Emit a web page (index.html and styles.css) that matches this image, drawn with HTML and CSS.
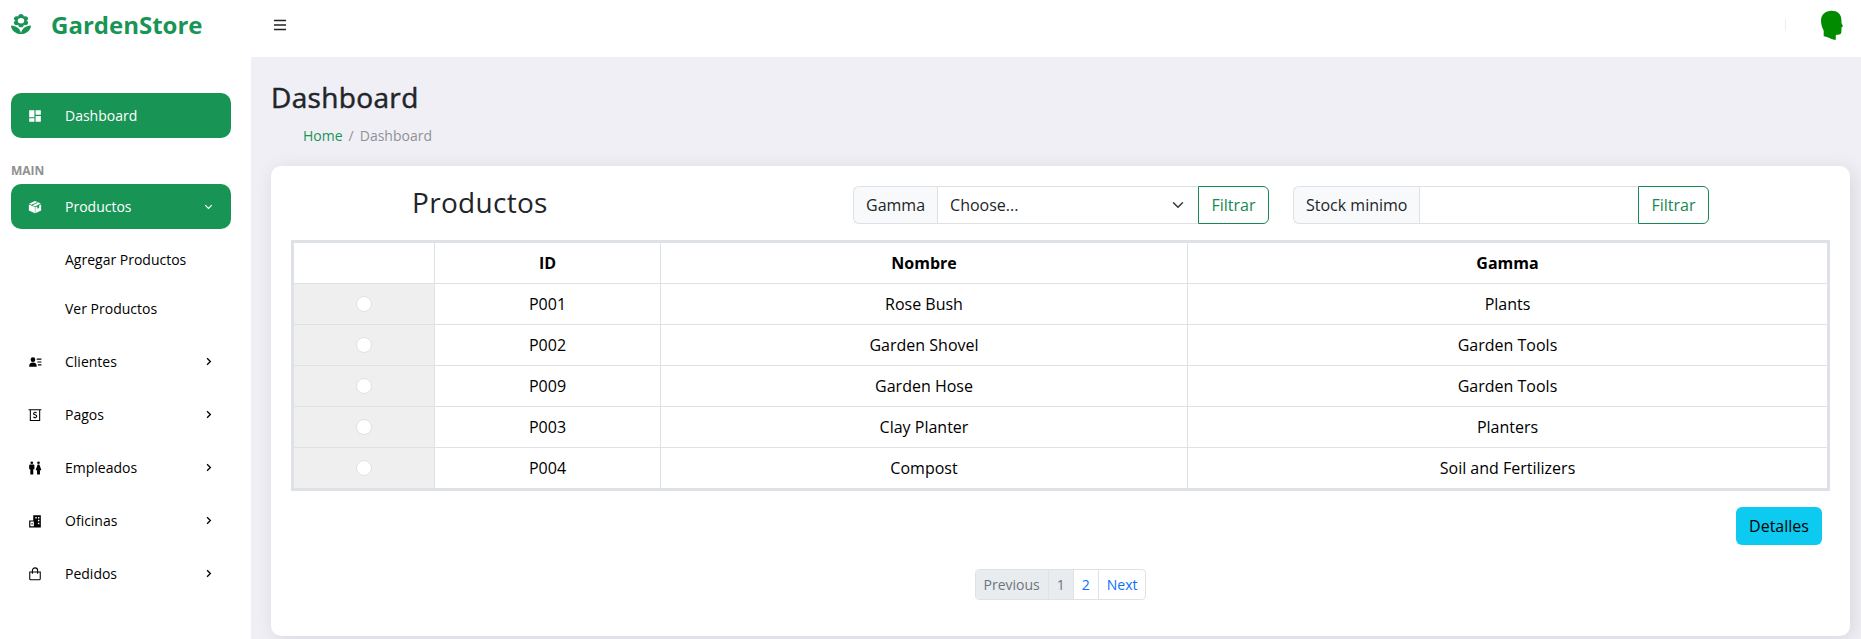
FILE: index.html
```html
<!DOCTYPE html>
<html lang="es">
<head>
<meta charset="utf-8">
<title>GardenStore</title>
<link rel="stylesheet" href="styles.css">
</head>
<body>
<header class="navbar">
  <div class="brand">
    <svg class="brand-icon" viewBox="3 1 18 21" preserveAspectRatio="none"><path d="M12 22c4.97 0 9-4.03 9-9-4.97 0-9 4.03-9 9zM5.6 10.25c0 1.38 1.12 2.5 2.5 2.5.53 0 1.01-.16 1.42-.44l-.02.19c0 1.38 1.12 2.5 2.5 2.5s2.5-1.12 2.5-2.5l-.02-.19c.4.28.89.44 1.42.44 1.38 0 2.5-1.12 2.5-2.5 0-1-.59-1.85-1.43-2.25.84-.4 1.43-1.25 1.43-2.25 0-1.38-1.12-2.5-2.5-2.5-.53 0-1.01.16-1.42.44l.02-.19C14.5 2.12 13.38 1 12 1S9.5 2.12 9.5 3.5l.02.19c-.4-.28-.89-.44-1.42-.44-1.38 0-2.5 1.12-2.5 2.5 0 1 .59 1.85 1.43 2.25-.84.4-1.43 1.25-1.43 2.25zM12 5.1a2.9 2.9 0 1 1 0 5.8a2.9 2.9 0 0 1 0-5.8zM3 13c0 4.97 4.03 9 9 9 0-4.97-4.03-9-9-9z"/></svg>
    <span>GardenStore</span>
  </div>
  <svg class="menu-icon" viewBox="0 0 16 16"><path d="M2 3.500h12M2 8h12M2 12.500h12"/></svg>
  <div class="nav-right">
    <span class="divider"></span>
    <svg class="avatar" viewBox="0 0 22 30"><path d="M2.700 26.200V20.500C1 17.500 0 14 0 10.500C0 4.500 4.500.7 10.500.7S20 4 20.400 9.500L20.500 13L22 16.300L20.600 17.300L20.300 22.500Q20 24.600 18 24.500L14.800 25V29.800C10 29.600 7 26.500 2.700 26.200z"/></svg>
  </div>
</header>
<div class="layout">
  <aside class="sidebar">
    <a class="item active"><svg class="icon" viewBox="0 0 24 24"><path d="M2 2h9v12H2zM13 2h9v8h-9zM2 16h9v6H2zM13 12h9v10h-9z"/></svg><span>Dashboard</span></a>
    <p class="section">MAIN</p>
    <a class="item active products"><svg class="icon" viewBox="0 0 24 24"><path d="M12 1.500L22 6.200L12 11L7.800 9L17 4.500L15.500 3.800L6 8.300L2 6.300zM1.500 7.500L11.800 12.200V22.800L1.500 17.800zM22.500 7.500V17.800L12.600 22.800V12.300L16 11V15L19 13.500V9.500z"/></svg><span>Productos</span><svg class="chevron" viewBox="0 0 16 16"><path d="M4.500 6.500L8 10L11.500 6.500"/></svg></a>
    <a class="sub">Agregar Productos</a>
    <a class="sub last">Ver Productos</a>
    <a class="item"><svg class="icon" viewBox="0 0 24 24"><path d="M8.500 4a4 4 0 1 1 0 8a4 4 0 0 1 0-8zM2 20c0-5 2-7 6.500-7s6.500 2 6.500 7zM15 6h8v2h-8zM16 11h7v2h-7zM17 16h6v2h-6z"/></svg><span>Clientes</span><svg class="chevron" viewBox="0 0 16 16"><path d="M6.500 4.500L10 8L6.500 11.500"/></svg></a>
    <a class="item"><svg class="icon outline" viewBox="0 0 24 24"><path d="M1 3H23M4 3V21.500H20V3M15 8.500C14 7.500 9.500 7 9.500 9.700C9.500 12.300 15 11 15 14C15 17 10 16.300 9 15.300M12 6.500V8M12 16V18"/></svg><span>Pagos</span><svg class="chevron" viewBox="0 0 16 16"><path d="M6.500 4.500L10 8L6.500 11.500"/></svg></a>
    <a class="item"><svg class="icon" viewBox="0 0 24 24"><circle cx="6.500" cy="3" r="2.300"/><circle cx="18" cy="3" r="2.300"/><path d="M3.500 6h6Q11 6 11 8v6H9v9H4v-9H2V8Q2 6 3.500 6zM16.500 6h3L23 16h-2.500v7h-5v-7H13z"/></svg><span>Empleados</span><svg class="chevron" viewBox="0 0 16 16"><path d="M6.500 4.500L10 8L6.500 11.500"/></svg></a>
    <a class="item"><svg class="icon" viewBox="0 0 24 24"><path fill-rule="evenodd" d="M9 2h13v21H2V11h7zM4 13v8h6v-8zM12.500 5v2.500H15V5zM17 5v2.500h2.500V5zM17 10v2.500h2.500V10zM17 15v2.500h2.500V15zM6 16h2v2H6z"/></svg><span>Oficinas</span><svg class="chevron" viewBox="0 0 16 16"><path d="M6.500 4.500L10 8L6.500 11.500"/></svg></a>
    <a class="item"><svg class="icon outline" viewBox="0 0 24 24"><path d="M3 8.500H21V20Q21 22 19 22H5Q3 22 3 20zM7.500 11.500V6C7.500 0 16.500 0 16.500 6V11.500"/></svg><span>Pedidos</span><svg class="chevron" viewBox="0 0 16 16"><path d="M6.500 4.500L10 8L6.500 11.500"/></svg></a>
  </aside>
  <main class="content">
    <h1 class="title">Dashboard</h1>
    <nav class="breadcrumb"><a>Home</a><span>/</span><span>Dashboard</span></nav>
    <section class="card">
      <div class="toolbar">
        <h2 class="heading">Productos</h2>
        <div class="group gamma">
          <span class="label">Gamma</span>
          <div class="field">Choose...<svg class="caret" viewBox="0 0 16 16"><path d="m2 5 6 6 6-6"/></svg></div>
          <button class="filter">Filtrar</button>
        </div>
        <div class="group stock">
          <span class="label">Stock minimo</span>
          <div class="field"></div>
          <button class="filter">Filtrar</button>
        </div>
      </div>
      <table class="table">
        <colgroup><col class="c-radio"><col class="c-id"><col class="c-name"><col></colgroup>
        <thead><tr><th></th><th>ID</th><th>Nombre</th><th>Gamma</th></tr></thead>
        <tbody>
          <tr><td class="pick"><i class="radio"></i></td><td>P001</td><td>Rose Bush</td><td>Plants</td></tr>
          <tr><td class="pick"><i class="radio"></i></td><td>P002</td><td>Garden Shovel</td><td>Garden Tools</td></tr>
          <tr><td class="pick"><i class="radio"></i></td><td>P009</td><td>Garden Hose</td><td>Garden Tools</td></tr>
          <tr><td class="pick"><i class="radio"></i></td><td>P003</td><td>Clay Planter</td><td>Planters</td></tr>
          <tr><td class="pick"><i class="radio"></i></td><td>P004</td><td>Compost</td><td>Soil and Fertilizers</td></tr>
        </tbody>
      </table>
      <div class="actions"><button class="details">Detalles</button></div>
      <div class="pagination"><span class="off">Previous</span><span class="off">1</span><a>2</a><a>Next</a></div>
    </section>
  </main>
</div>
</body>
</html>
```
FILE: styles.css
```css
* { box-sizing: border-box; }
body { margin: 0; height: 639px; overflow: hidden; font: 16px/24px "Open Sans", sans-serif; color: #212529; background: #fff; }
svg { display: block; flex: none; }
.navbar { height: 57px; display: flex; align-items: flex-start; background: #fff; }
.brand { width: 271px; padding: 7px 0 0 11px; display: flex; align-items: flex-start; color: #189555; font-size: 24px; line-height: 36px; font-weight: 700; }
.brand-icon { width: 20px; height: 20px; margin: 7px 20px 0 0; fill: #189555; }
.menu-icon { width: 16px; height: 16px; margin: 17px 0 0 1px; stroke: #222; stroke-width: 1.5; fill: none; }
.nav-right { margin-left: auto; display: flex; padding-right: 18px; }
.divider { width: 1px; height: 12px; margin: 19px 35px 0 0; background: #eee; }
.avatar { width: 22px; height: 30px; margin-top: 10px; fill: #008b00; }
.layout { display: flex; height: 582px; }
.sidebar { width: 251px; padding: 36px 20px 0 11px; font-size: 14px; color: #000; background: #fff; }
.item { height: 45px; margin-bottom: 8px; padding: 0 15px 0 17px; display: flex; align-items: center; border-radius: 10px; }
.item span { flex: 1; margin-left: 23px; }
.active { color: #fff; background: #189555; }
.products { margin-bottom: 9px; }
.icon { width: 14px; height: 14px; fill: currentColor; }
.outline { fill: none; stroke: currentColor; stroke-width: 1.8; }
.chevron { width: 15px; height: 15px; fill: none; stroke: currentColor; stroke-width: 1.4; }
.section { height: 38px; margin: 0; padding-top: 13px; font-size: 12px; line-height: 24px; font-weight: 700; color: #909090; }
.sub { display: block; height: 44px; margin-bottom: 5px; padding-left: 54px; line-height: 43px; }
.last { margin-bottom: 8px; }
.content { flex: 1; min-width: 0; padding: 23px 11px 0 20px; background: #f0eff5; }
.title { margin: 0; font-size: 28px; line-height: 34px; font-weight: 500; letter-spacing: .35px; -webkit-text-stroke: .5px currentColor; }
.breadcrumb { display: flex; gap: 6px; height: 52px; margin: 10px 0 0 32px; font-size: 14px; line-height: 24px; color: #919195; }
.breadcrumb a { color: #189555; }
.card { height: 470px; margin-top: -10px; padding: 20px 20px 0; border-radius: 10px; background: #fff; box-shadow: 3px 3px 20px rgba(0, 0, 0, .1); }
.toolbar { height: 54px; display: flex; align-items: flex-start; }
.heading { width: 562px; margin: -1px 0 0; padding-left: 121px; font-size: 28px; line-height: 34px; font-weight: 400; letter-spacing: .3px; }
.group { height: 38px; display: flex; }
.gamma { width: 416px; margin-right: 24px; }
.stock { width: 416px; }
.label { padding: 6px 12px; line-height: 24px; border: 1px solid #dee2e6; border-right: 0; border-radius: 6px 0 0 6px; background: #f8f9fa; }
.field { flex: 1; display: flex; justify-content: space-between; align-items: center; padding: 0 12px; border: 1px solid #dee2e6; border-right: 0; }
.caret { width: 16px; height: 12px; fill: none; stroke: #343a40; stroke-width: 2; stroke-linecap: round; stroke-linejoin: round; }
.filter { width: 71px; padding: 0; font: inherit; color: #198754; border: 1px solid #198754; border-radius: 0 6px 6px 0; background: #fff; }
.table { width: 1539px; table-layout: fixed; border-collapse: separate; border-spacing: 0; border: 3px solid #dee2e6; color: #000; text-align: center; }
.c-radio { width: 141px; }
.c-id { width: 226px; }
.c-name { width: 527px; }
.table th, .table td { height: 41px; padding: 0; border: solid #dee2e6; border-width: 0 1px 1px 0; }
.table th { font-weight: 700; }
.table th:last-child, .table td:last-child { border-right: 0; }
.table tbody tr:last-child td { height: 40px; border-bottom: 0; }
.table .pick { background: #efefef; }
.radio { display: block; width: 16px; height: 16px; margin: 0 auto; border: 1px solid #dee2e6; border-radius: 50%; background: #fff; }
.actions { display: flex; justify-content: flex-end; padding: 16px 8px 0 0; }
.details { width: 86px; height: 38px; padding: 0; font: inherit; color: #000; border: 0; border-radius: 6px; background: #0dcaf0; }
.pagination { width: max-content; margin: 24px auto 0; display: flex; border: 1px solid #dee2e6; border-radius: 4px; overflow: hidden; font-size: 14px; line-height: 21px; color: #0d6efd; }
.pagination > * { padding: 4px 8px; }
.pagination > * + * { border-left: 1px solid #dee2e6; }
.pagination .off { color: #6c757d; background: #e9ecef; }
```
